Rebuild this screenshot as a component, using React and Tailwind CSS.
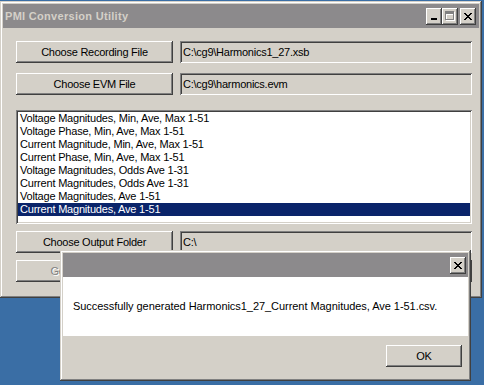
import React from "react";

const FONT = { fontFamily: '"Liberation Sans", Arial, sans-serif' };

const raised =
  "shadow-[inset_-1px_-1px_#404040,inset_1px_1px_#ffffff,inset_-2px_-2px_#808080,inset_2px_2px_#d4d0c8]";
const sunken =
  "shadow-[inset_1px_1px_#808080,inset_-1px_-1px_#ffffff,inset_2px_2px_#404040,inset_-2px_-2px_#d4d0c8]";
const frame =
  "shadow-[inset_-1px_-1px_#404040,inset_1px_1px_#d4d0c8,inset_-2px_-2px_#808080,inset_2px_2px_#ffffff]";

function CloseGlyph() {
  return (
    <svg width="8" height="7" viewBox="0 0 8 7" shapeRendering="crispEdges">
      <path
        fill="#000"
        d="M0 0h2v1H0zM6 0h2v1H6zM1 1h2v1H1zM5 1h2v1H5zM2 2h4v1H2zM3 3h2v1H3zM2 4h4v1H2zM1 5h2v1H1zM5 5h2v1H5zM0 6h2v1H0zM6 6h2v1H6z"
      />
    </svg>
  );
}

function MinGlyph() {
  return (
    <svg width="8" height="7" viewBox="0 0 8 7" shapeRendering="crispEdges">
      <path fill="#000" d="M1 5h6v2H1z" />
    </svg>
  );
}

function MaxGlyphDisabled() {
  return (
    <svg width="10" height="10" viewBox="0 0 10 10" shapeRendering="crispEdges">
      <path fill="#ffffff" d="M1 1h9v9H1zM2 4v5h7V4z" fillRule="evenodd" />
      <path fill="#808080" d="M0 0h9v9H0zM1 3v5h7V3z" fillRule="evenodd" />
    </svg>
  );
}

function TitleButton({ children, className = "" }) {
  return (
    <div
      className={`w-[16px] h-[17px] bg-[#d4d0c8] ${raised} flex items-center justify-center ${className}`}
    >
      {children}
    </div>
  );
}

function Button({ children, className = "", disabled = false }) {
  return (
    <div
      className={`h-[22px] bg-[#d4d0c8] ${raised} flex items-center justify-center text-[11px] tracking-[-0.25px] ${
        disabled ? "text-[#808080] [text-shadow:1px_1px_#ffffff]" : "text-black"
      } ${className}`}
    >
      {children}
    </div>
  );
}

function Field({ children }) {
  return (
    <div
      className={`flex-1 h-[22px] bg-[#d4d0c8] ${sunken} flex items-center pl-[3px] text-[11px] tracking-[-0.25px] text-black`}
    >
      {children}
    </div>
  );
}

const items = [
  "Voltage Magnitudes, Min, Ave, Max 1-51",
  "Voltage Phase, Min, Ave, Max 1-51",
  "Current Magnitude, Min, Ave, Max 1-51",
  "Current Phase, Min, Ave, Max 1-51",
  "Voltage Magnitudes, Odds Ave 1-31",
  "Current Magnitudes, Odds Ave 1-31",
  "Voltage Magnitudes, Ave 1-51",
  "Current Magnitudes, Ave 1-51",
];

export default function App() {
  return (
    <div
      className="relative w-[484px] h-[385px] bg-[#3a6ea5] overflow-hidden"
      style={FONT}
    >
      {/* Main window */}
      <div
        className={`absolute left-0 top-[1px] w-[482px] h-[297px] bg-[#d4d0c8] ${frame} p-[3px] flex flex-col`}
      >
        <div className="h-[24px] bg-[#8c8a8c] flex items-center pl-[2px] pr-[3px]">
          <span className="text-[11px] font-bold text-[#d4d0c8] tracking-[0.3px]">
            PMI Conversion Utility
          </span>
          <div className="ml-auto flex items-center">
            <TitleButton>
              <MinGlyph />
            </TitleButton>
            <TitleButton>
              <MaxGlyphDisabled />
            </TitleButton>
            <TitleButton className="ml-[2px]">
              <CloseGlyph />
            </TitleButton>
          </div>
        </div>

        <div className="flex flex-col pt-[13px] pl-[13px] pr-[7px]">
          <div className="flex gap-[7px]">
            <Button className="w-[157px]">Choose Recording File</Button>
            <Field>C:\cg9\Harmonics1_27.xsb</Field>
          </div>
          <div className="flex gap-[7px] mt-[10px]">
            <Button className="w-[157px]">Choose EVM File</Button>
            <Field>C:\cg9\harmonics.evm</Field>
          </div>

          <div className={`mt-[15px] h-[114px] bg-white ${sunken} p-[2px]`}>
            <div className="flex flex-col">
              {items.map((t, i) => {
                const sel = i === items.length - 1;
                return (
                  <div
                    key={t}
                    className={`h-[13px] leading-[13px] pl-[2px] text-[11px] tracking-[-0.2px] ${
                      sel ? "bg-[#0a246a] text-white" : "text-black"
                    }`}
                  >
                    {t}
                  </div>
                );
              })}
            </div>
          </div>

          <div className="flex gap-[7px] mt-[7px]">
            <Button className="w-[157px]">Choose Output Folder</Button>
            <Field>C:\</Field>
          </div>
          <div className="flex gap-[7px] mt-[7px]">
            <Button className="w-[157px]" disabled>
              Generate CSV File
            </Button>
            <Button className="flex-1">{""}</Button>
          </div>
        </div>
      </div>

      {/* Dialog */}
      <div
        className={`absolute left-[60px] top-[250px] w-[411px] h-[131px] bg-[#d4d0c8] ${frame} p-[3px] flex flex-col`}
      >
        <div className="h-[24px] bg-[#8c8a8c] flex items-center justify-end pr-[2px]">
          <TitleButton>
            <CloseGlyph />
          </TitleButton>
        </div>
        <div className="h-[59px] bg-white flex items-center pl-[10px] text-[11px] tracking-[-0.05px] text-black">
          Successfully generated Harmonics1_27_Current Magnitudes, Ave 1-51.csv.
        </div>
        <div className="flex-1 flex justify-end pt-[9px] pr-[6px]">
          <Button className="w-[76px]">OK</Button>
        </div>
      </div>
    </div>
  );
}
